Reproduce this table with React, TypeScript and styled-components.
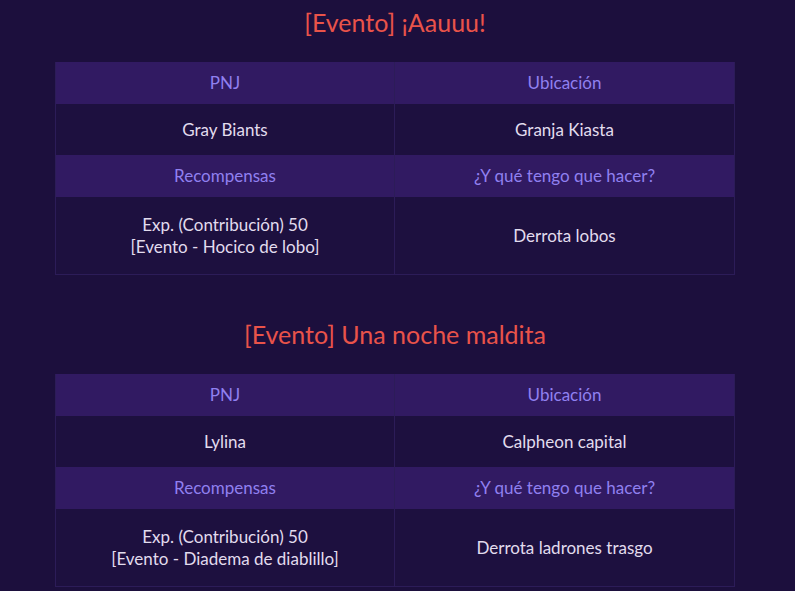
import React from "react";
import styled, { createGlobalStyle } from "styled-components";

const Global = createGlobalStyle`
  html, body { margin: 0; padding: 0; background: #1c0f3d; }
  body { font-family: Lato, "Noto Sans", sans-serif; }
`;

const Page = styled.div`
  width: 795px;
  min-height: 591px;
  background: #1c0f3d;
  padding: 4px 5px 0 0;
  box-sizing: border-box;
  display: flex;
  flex-direction: column;
  align-items: center;
  gap: 41px;
`;

const Section = styled.section`
  width: 680px;
  display: flex;
  flex-direction: column;
`;

const Title = styled.h2`
  margin: 0 0 22px;
  font-size: 25px;
  line-height: 36px;
  font-weight: 400;
  color: #e9534a;
  text-align: center;
`;

const Table = styled.div`
  display: grid;
  grid-template-columns: 1fr 1fr;
  border: 1px solid #2c1c58;
  border-top: none;
  box-sizing: border-box;
  width: 680px;
`;

const Cell = styled.div<{ $head?: boolean; $tall?: boolean }>`
  display: flex;
  align-items: center;
  justify-content: center;
  text-align: center;
  height: ${(p) => (p.$head ? "42px" : p.$tall ? "77px" : "51px")};
  background: ${(p) => (p.$head ? "#311a62" : "#1d103f")};
  color: ${(p) => (p.$head ? "#9080f0" : "#e2dcee")};
  font-size: 17px;
  line-height: 22px;
  box-sizing: border-box;
  border-right: 1px solid #2c1c58;
  &:nth-child(2n) { border-right: none; }
`;

const quests = [
  {
    title: "[Evento] ¡Aauuu!",
    npc: "Gray Biants",
    loc: "Granja Kiasta",
    reward: ["Exp. (Contribución) 50", "[Evento - Hocico de lobo]"],
    task: "Derrota lobos",
  },
  {
    title: "[Evento] Una noche maldita",
    npc: "Lylina",
    loc: "Calpheon capital",
    reward: ["Exp. (Contribución) 50", "[Evento - Diadema de diablillo]"],
    task: "Derrota ladrones trasgo",
  },
];

export default function App() {
  return (
    <>
      <Global />
      <Page>
        {quests.map((q) => (
          <Section key={q.title}>
            <Title>{q.title}</Title>
            <Table>
              <Cell $head>PNJ</Cell>
              <Cell $head>Ubicación</Cell>
              <Cell>{q.npc}</Cell>
              <Cell>{q.loc}</Cell>
              <Cell $head>Recompensas</Cell>
              <Cell $head>¿Y qué tengo que hacer?</Cell>
              <Cell $tall>
                <div>
                  {q.reward[0]}
                  <br />
                  {q.reward[1]}
                </div>
              </Cell>
              <Cell $tall>{q.task}</Cell>
            </Table>
          </Section>
        ))}
      </Page>
    </>
  );
}
